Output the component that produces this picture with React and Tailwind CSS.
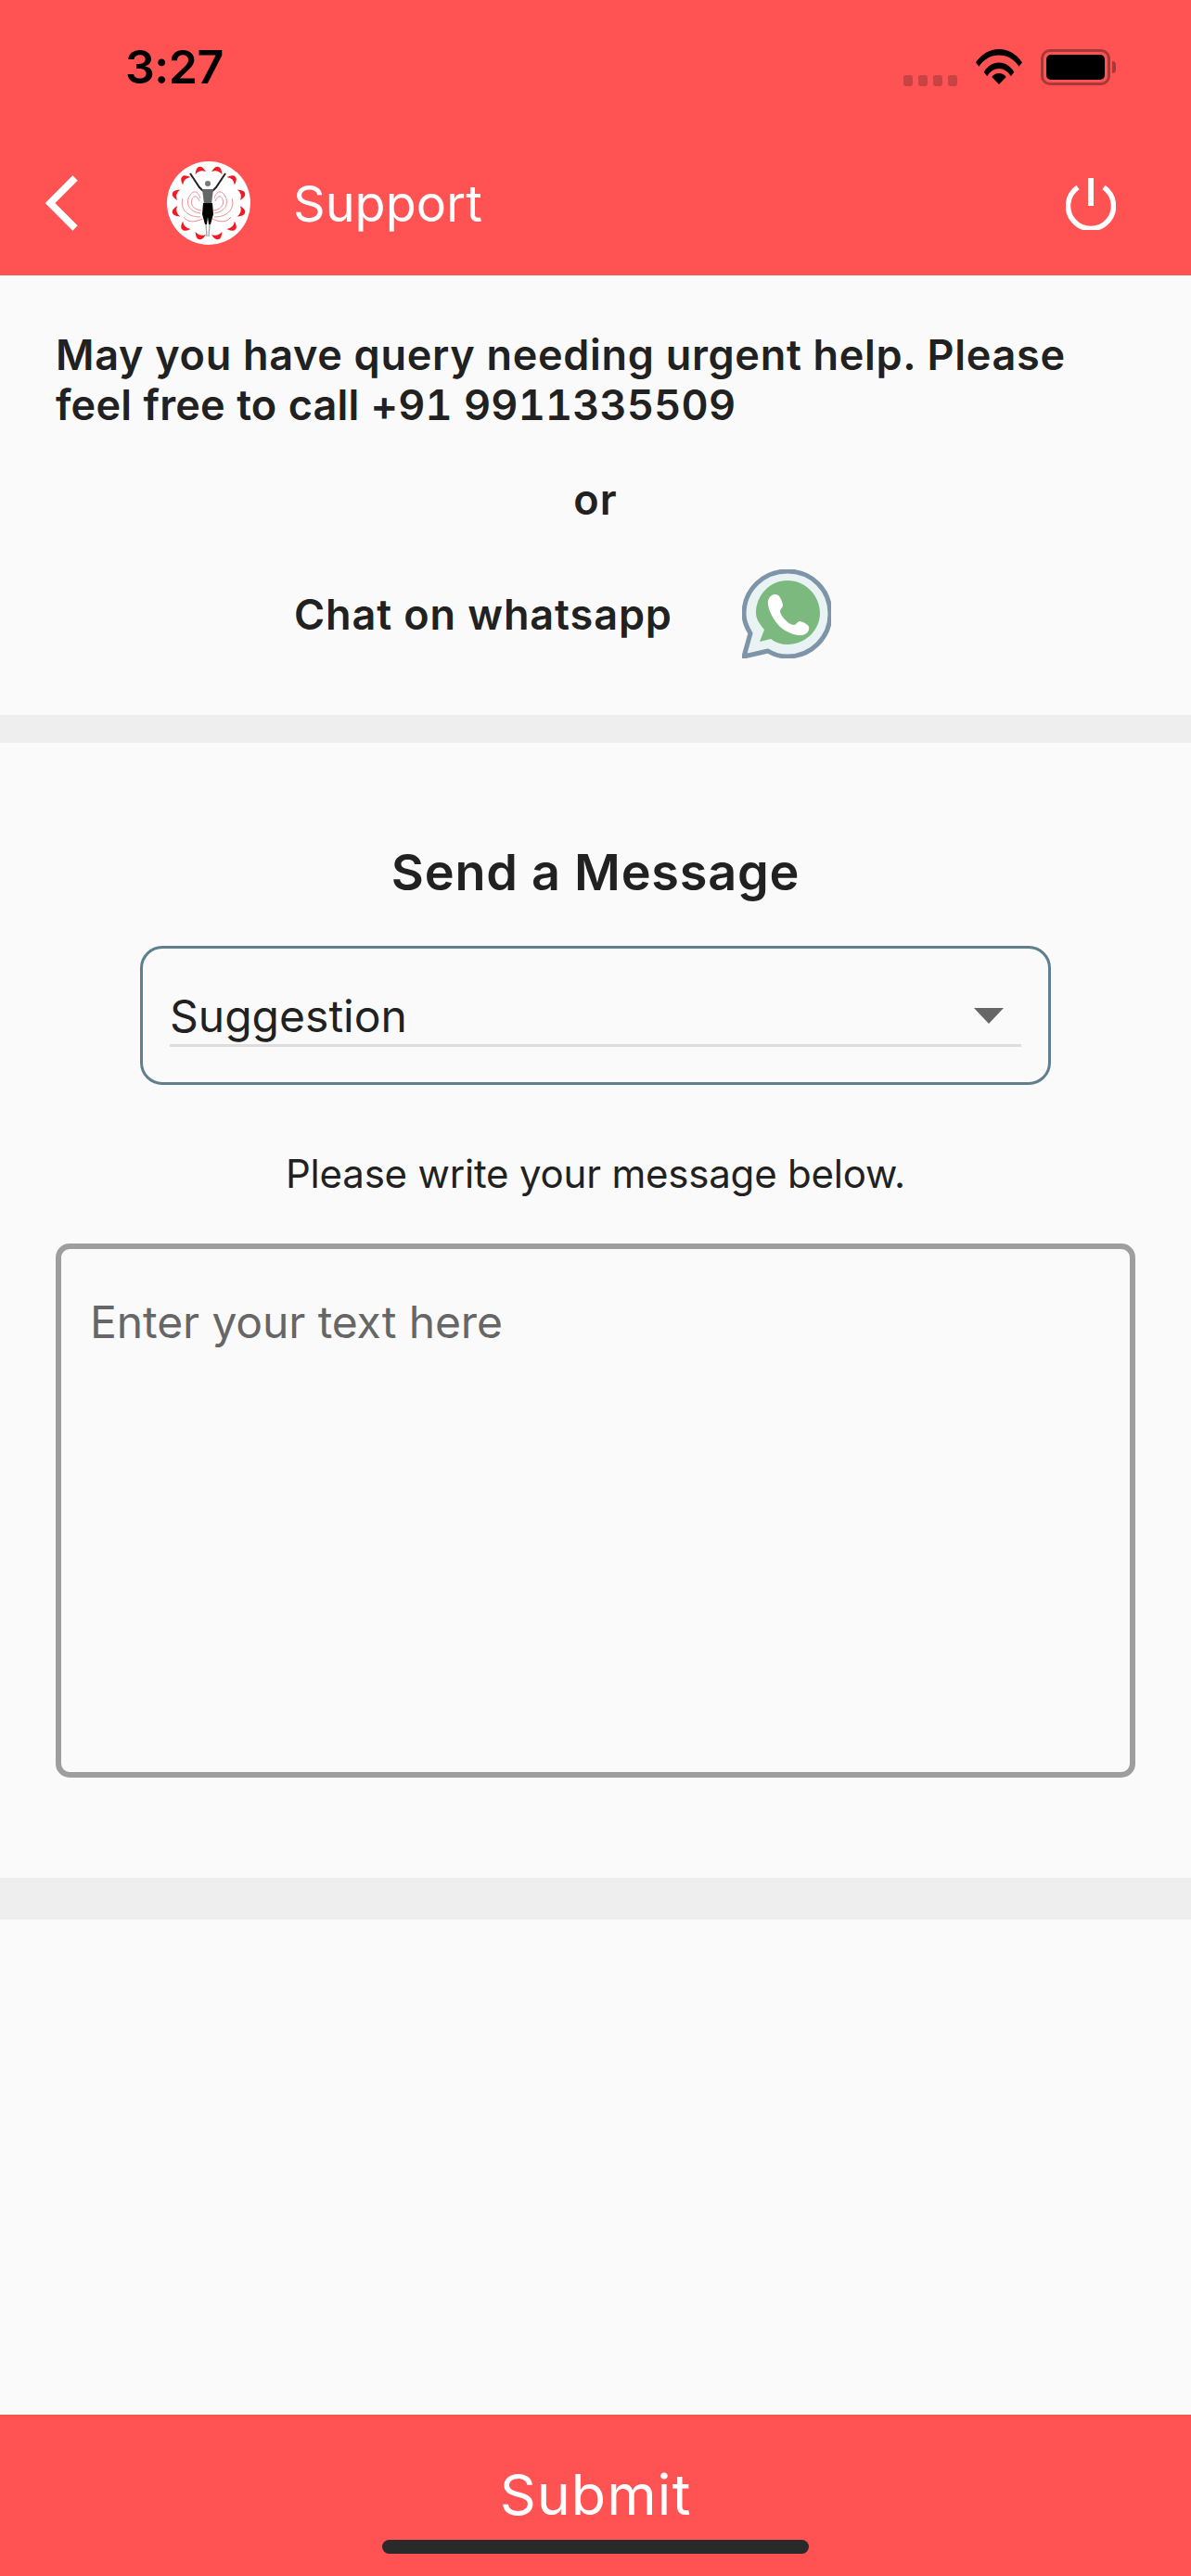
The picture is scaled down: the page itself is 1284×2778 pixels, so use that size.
import React from "react";

const pt = (ang, r) => `${(45 + r * Math.sin(ang)).toFixed(1)} ${(45 - r * Math.cos(ang)).toFixed(1)}`;
const petals = Array.from({ length: 12 }, (_, i) => {
  const a = ((15 + i * 30) * Math.PI) / 180;
  const d = (10 * Math.PI) / 180;
  return `M${pt(a - d, 34)} Q${pt(a - d / 2, 41)} ${pt(a, 40.5)} Q${pt(a + d / 2, 41)} ${pt(a + d, 34)} Q${pt(a, 38)} ${pt(a - d, 34)}Z`;
});

function Logo() {
  return (
    <svg width="90" height="90" viewBox="0 0 90 90" className="shrink-0">
      <circle cx="45" cy="45" r="45" fill="#fff" />
      {petals.map((d, i) => (
        <path key={i} d={d} fill="#ee1c25" />
      ))}
      <g fill="none" stroke="#e2606a" strokeWidth="0.7">
        <path d="M36 56C24 54 20 46 24 38S34 32 36 40" />
        <path d="M37 53C28 52 25 46 27 41S33 37 35 43" />
        <path d="M36 60C20 60 14 50 17 40" />
        <path d="M38 62C30 66 22 66 18 60" />
        <path d="M51 56C63 54 67 46 63 38S53 32 51 40" />
        <path d="M50 53C59 52 62 46 60 41S54 37 52 43" />
        <path d="M51 60C67 60 73 50 70 40" />
        <path d="M49 62C57 66 65 66 69 60" />
      </g>
      <path d="M25 13L35 28L39 32" fill="none" stroke="#222" strokeWidth="2" />
      <path d="M63 13L53 28L49 32" fill="none" stroke="#222" strokeWidth="2" />
      <circle cx="44" cy="24" r="3" fill="#777" />
      <path d="M38 30H50L48 46H40Z" fill="#666" />
      <path d="M39 45H49L50 57L47 68H45L44 60L43 68H41L38 57Z" fill="#000" />
      <path d="M42 68L43 81M46 68L45 81" fill="none" stroke="#aaa" strokeWidth="1.4" />
    </svg>
  );
}

function Wifi() {
  return (
    <svg width="50" height="38" viewBox="0 0 50 38">
      <path d="M0 14.300C6 5.500 15 0 25 0S44 5.500 50 14.300L46.600 18.800C41.500 11 33.800 6.500 25 6.500S8.500 11 3.400 18.800Z" fill="#000" />
      <path d="M8.700 24.800C12.400 18.500 18.300 14.500 25 14.500S37.600 18.500 41.300 24.800L37.800 29.200C34.800 24.300 30.300 21 25 21S15.200 24.300 12.200 29.200Z" fill="#000" />
      <path d="M17.300 30C19.300 27.500 22 26 25 26S30.700 27.500 32.700 30L25 38Z" fill="#000" />
    </svg>
  );
}

function Whatsapp() {
  return (
    <svg width="96" height="96" viewBox="0 0 96 96" className="shrink-0">
      <path d="M2 94L9 69C4 61 2 55 2 48C2 22 23 2 49 2S95 22 95 48S74 94 49 94C41 94 34 92 28 88Z" fill="#e9f3f4" stroke="#7e94a8" strokeWidth="5" strokeLinejoin="round" />
      <path d="M19 78L24 65C18 58 15 53 15 47C15 28 30 12 49 12S84 28 84 47S68 81 49 81C42 81 36 79 31 75Z" fill="#7cb97f" />
      <path d="M35 27C31 27 27 32 28 38C29 45 34 55 41 62C48 68 58 72 65 71C70 70 73 66 72 62C72 60 65 56 62 56C60 56 58 60 56 60C53 60 49 57 46 54C43 51 41 47 41 45C41 43 44 41 44 39C44 36 41 29 39 28C38 27 36 27 35 27Z" fill="#fff" />
    </svg>
  );
}

export default function App() {
  return (
    <div className="flex flex-col w-[1284px] h-[2778px] bg-[#fafafa] text-[#212121] font-['Inter',sans-serif]">
      <header className="h-[297px] bg-[#ff5252] shrink-0">
        <div className="flex items-start h-[174px] pl-[135px] pr-[81px] pt-[44px]">
          <span className="font-semibold text-[50px] leading-[56px] text-black tracking-[-0.5px]">3:27</span>
          <div className="ml-auto flex items-start pt-[9px]">
            <div className="flex gap-[6px] mt-[28px] mr-[20px]">
              <span className="w-[10px] h-[12px] rounded-[3px] bg-[#c84444]" />
              <span className="w-[10px] h-[12px] rounded-[3px] bg-[#c84444]" />
              <span className="w-[10px] h-[12px] rounded-[3px] bg-[#c84444]" />
              <span className="w-[10px] h-[12px] rounded-[3px] bg-[#c84444]" />
            </div>
            <Wifi />
            <div className="ml-[20px] flex items-center">
              <div className="w-[75px] h-[39px] rounded-[10px] border-[3px] border-[#a93737] p-[3px]">
                <div className="w-full h-full rounded-[5px] bg-black" />
              </div>
              <div className="w-[4px] h-[13px] ml-[2px] rounded-r-full bg-[#a93737]" />
            </div>
          </div>
        </div>
        <div className="flex items-center h-[90px] pl-[48px] pr-[81px]">
          <svg width="36" height="60" viewBox="0 0 36 60" className="shrink-0">
            <path d="M33 3L6 30L33 57" fill="none" stroke="#fff" strokeWidth="7.500" />
          </svg>
          <div className="ml-[96px]"><Logo /></div>
          <span className="ml-[46px] mt-[1px] text-[54px] leading-[64px] text-white">Support</span>
          <svg width="54" height="56" viewBox="0 0 54 56" className="ml-auto shrink-0 mt-[2px]">
            <path d="M13 10A24.500 24.500 0 1 0 41 10" fill="none" stroke="#fff" strokeWidth="5.500" />
            <path d="M27 0V30" fill="none" stroke="#fff" strokeWidth="6" />
          </svg>
        </div>
      </header>

      <section className="shrink-0 h-[474px] px-[60px] pt-[59px] font-semibold text-[45px]">
        <p className="leading-[54px] tracking-[0.7px] whitespace-nowrap">May you have query needing urgent help. Please</p>
        <p className="leading-[54px] tracking-[0.2px] tabular-nums whitespace-nowrap">feel free to call +91 9911335509</p>
        <p className="mt-[48px] text-center leading-[53px] tracking-[1.1px]">or</p>
        <div className="mt-[49px] flex items-center pl-[257px] leading-[53px]">
          <span className="tracking-[0.9px]">Chat on whatsapp</span>
          <div className="ml-[75px]"><Whatsapp /></div>
        </div>
      </section>

      <div className="h-[30px] bg-[#eeeeee] shrink-0" />

      <section className="shrink-0 h-[1224px] flex flex-col items-center">
        <h2 className="mt-[108px] font-semibold text-[54px] leading-[64px] tracking-[0.75px]">Send a Message</h2>
        <div className="mt-[47px] w-[982px] h-[150px] rounded-[24px] border-[3px] border-[#5f7f8f] px-[29px] flex flex-col">
          <div className="mt-[42px] h-[64px] flex items-center justify-between border-b-[3px] border-[#dddddd]">
            <span className="text-[48px] leading-[60px]">Suggestion</span>
            <svg width="32" height="17" viewBox="0 0 32 17" className="mr-[19px]">
              <path d="M0 0H32L16 17Z" fill="#666666" />
            </svg>
          </div>
        </div>
        <p className="mt-[68px] text-[42px] leading-[56px] tracking-[-0.2px]">Please write your message below.</p>
        <div className="mt-[47px] w-[1164px] h-[576px] rounded-[15px] border-[6px] border-[#9e9e9e] px-[31px] pt-[49px]">
          <span className="block text-[48px] leading-[60px] tracking-[-0.1px] text-[#666666]">Enter your text here</span>
        </div>
      </section>

      <div className="h-[45px] bg-[#eeeeee] shrink-0" />
      <div className="flex-1" />

      <footer className="h-[174px] bg-[#ff5252] shrink-0 flex flex-col items-center">
        <span className="mt-[50px] text-[61px] leading-[72px] tracking-[1px] text-white">Submit</span>
        <div className="mt-[13px] w-[460px] h-[15px] rounded-full bg-[#2a2a2a]" />
      </footer>
    </div>
  );
}
